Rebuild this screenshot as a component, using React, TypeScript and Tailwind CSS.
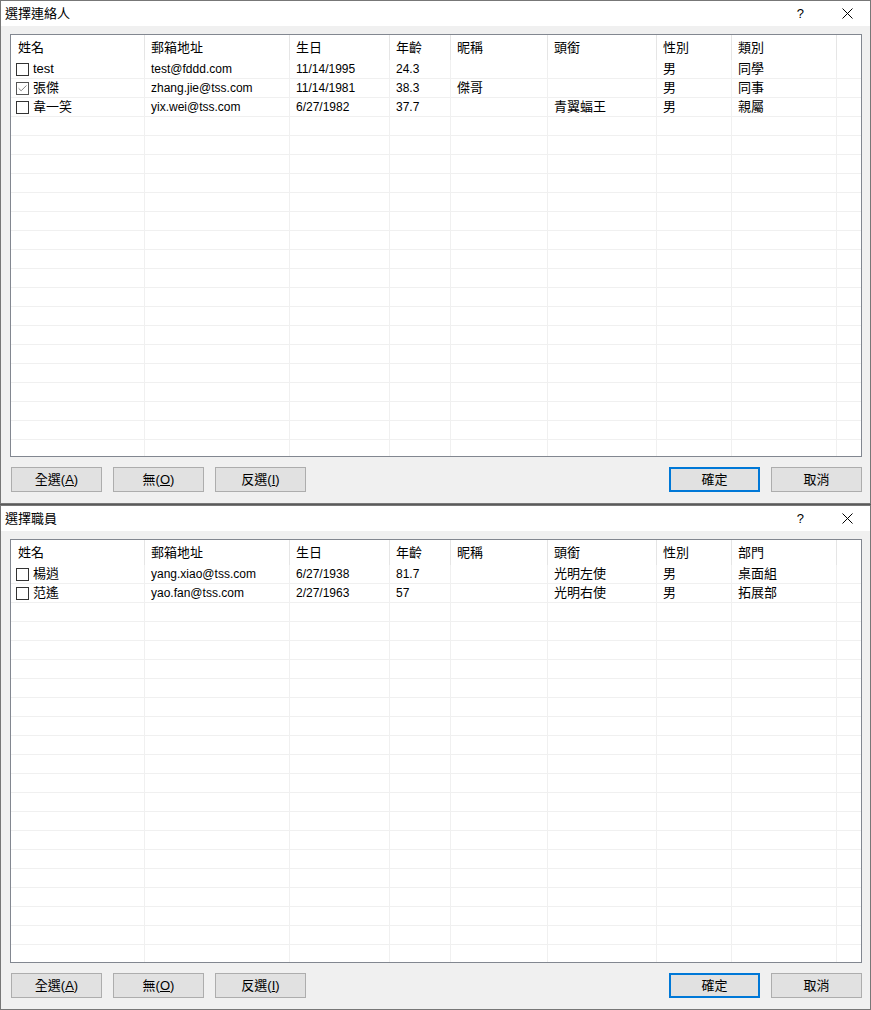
import { Check } from 'lucide-react';

type Row = { checked: boolean; cells: string[] };

const colWidths = ['w-[134px]', 'w-[145px]', 'w-[100px]', 'w-[61px]', 'w-[97px]', 'w-[109px]', 'w-[75px]', 'w-[105px]'];
// date and age columns render a bit smaller, like the real list view
const smallCols = [1, 2, 3];

const contacts: Row[] = [
  { checked: false, cells: ['test', 'test@fddd.com', '11/14/1995', '24.3', '', '', '男', '同學'] },
  { checked: true, cells: ['張傑', 'zhang.jie@tss.com', '11/14/1981', '38.3', '傑哥', '', '男', '同事'] },
  { checked: false, cells: ['韋一笑', 'yix.wei@tss.com', '6/27/1982', '37.7', '', '青翼蝠王', '男', '親屬'] },
];

const staff: Row[] = [
  { checked: false, cells: ['楊逍', 'yang.xiao@tss.com', '6/27/1938', '81.7', '', '光明左使', '男', '桌面組'] },
  { checked: false, cells: ['范遙', 'yao.fan@tss.com', '2/27/1963', '57', '', '光明右使', '男', '拓展部'] },
];

function CheckBox({ checked }: { checked: boolean }) {
  return (
    <span
      className={`flex h-[13px] w-[13px] shrink-0 items-center justify-center border bg-white ${
        checked ? 'border-[#555]' : 'border-[#333]'
      }`}
    >
      {checked && <Check className="h-[11px] w-[11px] text-[#555]" strokeWidth={1.6} />}
    </span>
  );
}

function ListView({ headers, rows }: { headers: string[]; rows: Row[] }) {
  const filler = Array.from({ length: 24 - rows.length });

  return (
    <div className="min-h-0 flex-1 overflow-hidden border border-[#828790] bg-white">
      <div className="flex h-[25px] items-center">
        {headers.map((h, i) => (
          <div
            key={h}
            className={`flex h-full ${colWidths[i]} shrink-0 items-center border-r border-[#e5e5e5] ${i === 0 ? 'pl-[7px]' : 'pl-[6px]'} text-[13px]`}
          >
            {h}
          </div>
        ))}
        <div className="flex-1" />
      </div>

      {rows.map((row, r) => (
        <div key={r} className="flex h-[19px] border-b border-[#f0f0f0]">
          {row.cells.map((c, i) => (
            <div
              key={i}
              className={`flex h-full ${colWidths[i]} shrink-0 items-center border-r border-[#f0f0f0] whitespace-nowrap ${
                smallCols.includes(i) ? 'text-[12px]' : 'text-[13px]'
              } ${i === 0 ? 'gap-[4px] pl-[5px]' : 'pl-[6px]'}`}
            >
              {i === 0 && <CheckBox checked={row.checked} />}
              {c}
            </div>
          ))}
          <div className="flex-1" />
        </div>
      ))}

      {filler.map((_, r) => (
        <div key={`f${r}`} className="flex h-[19px] border-b border-[#f0f0f0]">
          {colWidths.map((w, i) => (
            <div key={i} className={`h-full ${w} shrink-0 border-r border-[#f0f0f0]`} />
          ))}
          <div className="flex-1" />
        </div>
      ))}
    </div>
  );
}

function Button({ children, primary }: { children: React.ReactNode; primary?: boolean }) {
  return (
    <button
      className={`flex h-[25px] w-[91px] items-center justify-center bg-[#e1e1e1] text-[13px] text-black ${
        primary ? 'border-2 border-[#0078d7]' : 'border border-[#adadad]'
      }`}
    >
      {children}
    </button>
  );
}

function Dialog({ title, headers, rows, height }: { title: string; headers: string[]; rows: Row[]; height: string }) {
  return (
    <div className={`flex ${height} w-[871px] shrink-0 flex-col border border-[#777] bg-[#f0f0f0]`}>
      <div className="flex h-[25px] shrink-0 items-center bg-white pl-[4px]">
        <span className="text-[13px]">{title}</span>
        <div className="flex-1" />
        <span className="mr-[38px] text-[13px]">?</span>
        <svg width="11" height="11" viewBox="0 0 11 11" className="mr-[17px]">
          <path d="M0.5 0.5 L10.5 10.5 M10.5 0.5 L0.5 10.5" stroke="#000" strokeWidth="1" fill="none" />
        </svg>
      </div>

      <div className="flex min-h-0 flex-1 flex-col pt-[8px] pr-[8px] pb-[11px] pl-[9px]">
        <ListView headers={headers} rows={rows} />

        <div className="mt-[10px] ml-[1px] flex shrink-0 gap-[11px]">
          <Button>
            全選(<span className="underline">A</span>)
          </Button>
          <Button>
            無(<span className="underline">O</span>)
          </Button>
          <Button>
            反選(<span className="underline">I</span>)
          </Button>
          <div className="flex-1" />
          <Button primary>確定</Button>
          <Button>取消</Button>
        </div>
      </div>
    </div>
  );
}

export default function App() {
  const base = ['姓名', '郵箱地址', '生日', '年齡', '昵稱', '頭銜', '性別'];

  return (
    <div
      className="flex h-[1010px] w-[871px] flex-col gap-[1px] overflow-hidden bg-[#5a5a5a] text-black"
      style={{ fontFamily: '"Liberation Sans", "Noto Sans CJK TC", sans-serif' }}
    >
      <Dialog title="選擇連絡人" headers={[...base, '類別']} rows={contacts} height="h-[504px]" />
      <Dialog title="選擇職員" headers={[...base, '部門']} rows={staff} height="h-[505px]" />
    </div>
  );
}
